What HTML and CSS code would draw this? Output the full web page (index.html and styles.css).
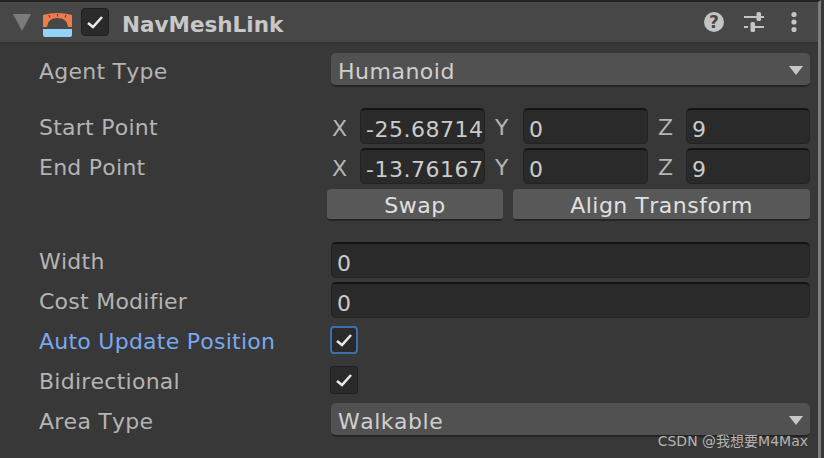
FILE: index.html
```html
<!DOCTYPE html>
<html lang="en">
<head>
    <meta charset="UTF-8">
    <meta name="viewport" content="width=device-width, initial-scale=1.0">
    <title>NavMeshLink</title>
    <link rel="stylesheet" href="styles.css">
</head>
<body>
    <div class="inspector">
        <!-- Component header -->
        <div class="header">
            <span class="foldout"></span>
            <svg class="comp-icon" width="29" height="24" viewBox="0 0 29 24">
                <path d="M0 2 Q14.5 -2 29 2 V14 H25 Q24 5 14.5 5 Q5 5 4 14 H0 Z" fill="#ee7b4c"/>
                <path d="M6 2 L7 4.5 M14.5 1 V3.5 M23 2 L22 4.5" stroke="#5e4a42" stroke-width="1.2"/>
                <path d="M0 16 H29 V22 Q29 24 27 24 H2 Q0 24 0 22 Z" fill="#92d3f8"/>
            </svg>
            <span class="checkbox header-check">
                <svg width="20" height="20" viewBox="0 0 20 20"><path d="M3 11 L8 15 L17 5" class="tick"/></svg>
            </span>
            <span class="title">NavMeshLink</span>
            <div class="header-tools">
                <span class="help">?</span>
                <svg class="sliders" width="20" height="20" viewBox="0 0 20 20">
                    <path d="M0 5 H20 M0 15 H4 M8 15 H20" stroke="#c4c4c4" stroke-width="2"/>
                    <rect x="12.5" y="0" width="4.5" height="9" rx="1.5" fill="#c4c4c4"/>
                    <rect x="6.5" y="10" width="4.5" height="10" rx="1.5" fill="#c4c4c4"/>
                </svg>
                <svg width="8" height="22" viewBox="0 0 8 22">
                    <circle cx="4" cy="3.5" r="2.6" fill="#c4c4c4"/>
                    <circle cx="4" cy="11" r="2.6" fill="#c4c4c4"/>
                    <circle cx="4" cy="18.5" r="2.6" fill="#c4c4c4"/>
                </svg>
            </div>
        </div>

        <div class="body">
            <div class="row">
                <label>Agent Type</label>
                <div class="dropdown"><span>Humanoid</span><i class="arrow"></i></div>
            </div>

            <div class="row first-vector">
                <label>Start Point</label>
                <div class="vector">
                    <span class="axis">X</span><div class="field">-25.68714</div>
                    <span class="axis axis-gap">Y</span><div class="field">0</div>
                    <span class="axis axis-gap">Z</span><div class="field">9</div>
                </div>
            </div>
            <div class="row">
                <label>End Point</label>
                <div class="vector">
                    <span class="axis">X</span><div class="field">-13.76167</div>
                    <span class="axis axis-gap">Y</span><div class="field">0</div>
                    <span class="axis axis-gap">Z</span><div class="field">9</div>
                </div>
            </div>
            <div class="buttons">
                <button>Swap</button>
                <button>Align Transform</button>
            </div>

            <div class="row width-row">
                <label>Width</label>
                <div class="field">0</div>
            </div>
            <div class="row">
                <label>Cost Modifier</label>
                <div class="field">0</div>
            </div>
            <div class="row">
                <label class="changed">Auto Update Position</label>
                <span class="checkbox focused">
                    <svg width="20" height="20" viewBox="0 0 20 20"><path d="M3 11 L8 15 L17 5" class="tick"/></svg>
                </span>
            </div>
            <div class="row">
                <label>Bidirectional</label>
                <span class="checkbox">
                    <svg width="20" height="20" viewBox="0 0 20 20"><path d="M3 11 L8 15 L17 5" class="tick"/></svg>
                </span>
            </div>
            <div class="row">
                <label>Area Type</label>
                <div class="dropdown"><span>Walkable</span><i class="arrow"></i></div>
            </div>
        </div>
    </div>
    <div class="watermark">CSDN @我想要M4Max</div>
</body>
</html>
```

FILE: styles.css
```css
html, body {
    margin: 0;
    padding: 0;
    height: 100%;
    overflow: hidden;
    background: #383838;
}
body {
    font-family: "DejaVu Sans", "Noto Sans CJK SC", sans-serif;
    font-size: 22px;
    font-kerning: none;
    letter-spacing: 0.25px;
    color: #b4b4b4;
}
.inspector {
    box-sizing: border-box;
    width: 821px;
    height: 458px;
    border-top: 2px solid #232323;
    border-right: 3px solid #7d7d7d;
}
.header {
    display: flex;
    align-items: center;
    height: 40px;
    background: #474747;
    border-bottom: 2px solid #333;
    padding-left: 13px;
}
.foldout {
    width: 0;
    height: 0;
    border-left: 9px solid transparent;
    border-right: 9px solid transparent;
    border-top: 17px solid #7b7b7b;
    margin-right: 12px;
}
.comp-icon {
    margin: 6px 9px 0 0;
}
.header-check {
    margin-right: 13px;
}
.title {
    font-weight: bold;
    color: #c8c8c8;
    font-size: 21.5px;
    letter-spacing: 0;
    padding-top: 5px;
}
.header-tools {
    margin-left: auto;
    display: flex;
    align-items: center;
    padding-right: 20px;
}
.help {
    width: 20px;
    height: 20px;
    border-radius: 50%;
    background: #c4c4c4;
    color: #474747;
    font-size: 17px;
    font-weight: bold;
    line-height: 20px;
    text-align: center;
}
.sliders {
    margin: 0 26px 0 20px;
}
.body {
    padding: 8px 8px 0 39px;
}
.row {
    display: grid;
    grid-template-columns: 292px 1fr;
    align-items: center;
    height: 36px;
    margin-bottom: 4px;
}
.row label {
    padding-top: 2px;
}
.first-vector {
    margin-top: 20px;
}
.width-row {
    margin-top: 21px;
}
label.changed {
    color: #7ba7ee;
}
.dropdown {
    display: flex;
    justify-content: space-between;
    align-items: center;
    height: 34px;
    box-sizing: border-box;
    background: #515151;
    border-radius: 5px;
    border-bottom: 2px solid #242424;
    padding: 0 7px;
    letter-spacing: 0.5px;
    color: #cfcfcf;
}
.dropdown span {
    padding-top: 4px;
}
.arrow {
    width: 0;
    height: 0;
    margin-top: 2px;
    border-left: 7px solid transparent;
    border-right: 7px solid transparent;
    border-top: 9px solid #c8c8c8;
}
.vector {
    display: grid;
    grid-template-columns: 29px 125px 38px 125px 38px 1fr;
    align-items: center;
}
.axis {
    padding-left: 1px;
    padding-top: 4px;
}
.axis-gap {
    padding-left: 10px;
    padding-top: 2px;
}
.field {
    box-sizing: border-box;
    height: 36px;
    line-height: 40px;
    background: #2a2a2a;
    border: 1px solid #232323;
    border-top: 2px solid #141414;
    border-radius: 5px;
    padding-left: 5px;
    letter-spacing: 0.5px;
    color: #cbcbcb;
    white-space: nowrap;
    overflow: hidden;
}
.buttons {
    display: grid;
    grid-template-columns: 176px 1fr;
    gap: 10px;
    margin: 5px 0 0 288px;
    height: 32px;
}
button {
    font: inherit;
    letter-spacing: 0.5px;
    color: #e0e0e0;
    background: #585858;
    border: none;
    border-bottom: 2px solid #242424;
    border-radius: 4px;
    padding: 2px 0 0;
}
.checkbox {
    box-sizing: border-box;
    display: flex;
    align-items: center;
    justify-content: center;
    width: 28px;
    height: 28px;
    background: #2a2a2a;
    border: 1px solid #1f1f1f;
    border-radius: 4px;
}
.row .checkbox {
    margin-left: -1px;
}
.focused {
    border: 2px solid #3c6ead;
}
.tick {
    fill: none;
    stroke: #eaeaea;
    stroke-width: 2.6;
}
.watermark {
    position: absolute;
    right: 16px;
    bottom: 8px;
    font-size: 14px;
    letter-spacing: 0;
    color: #b4b4b4;
}
```
